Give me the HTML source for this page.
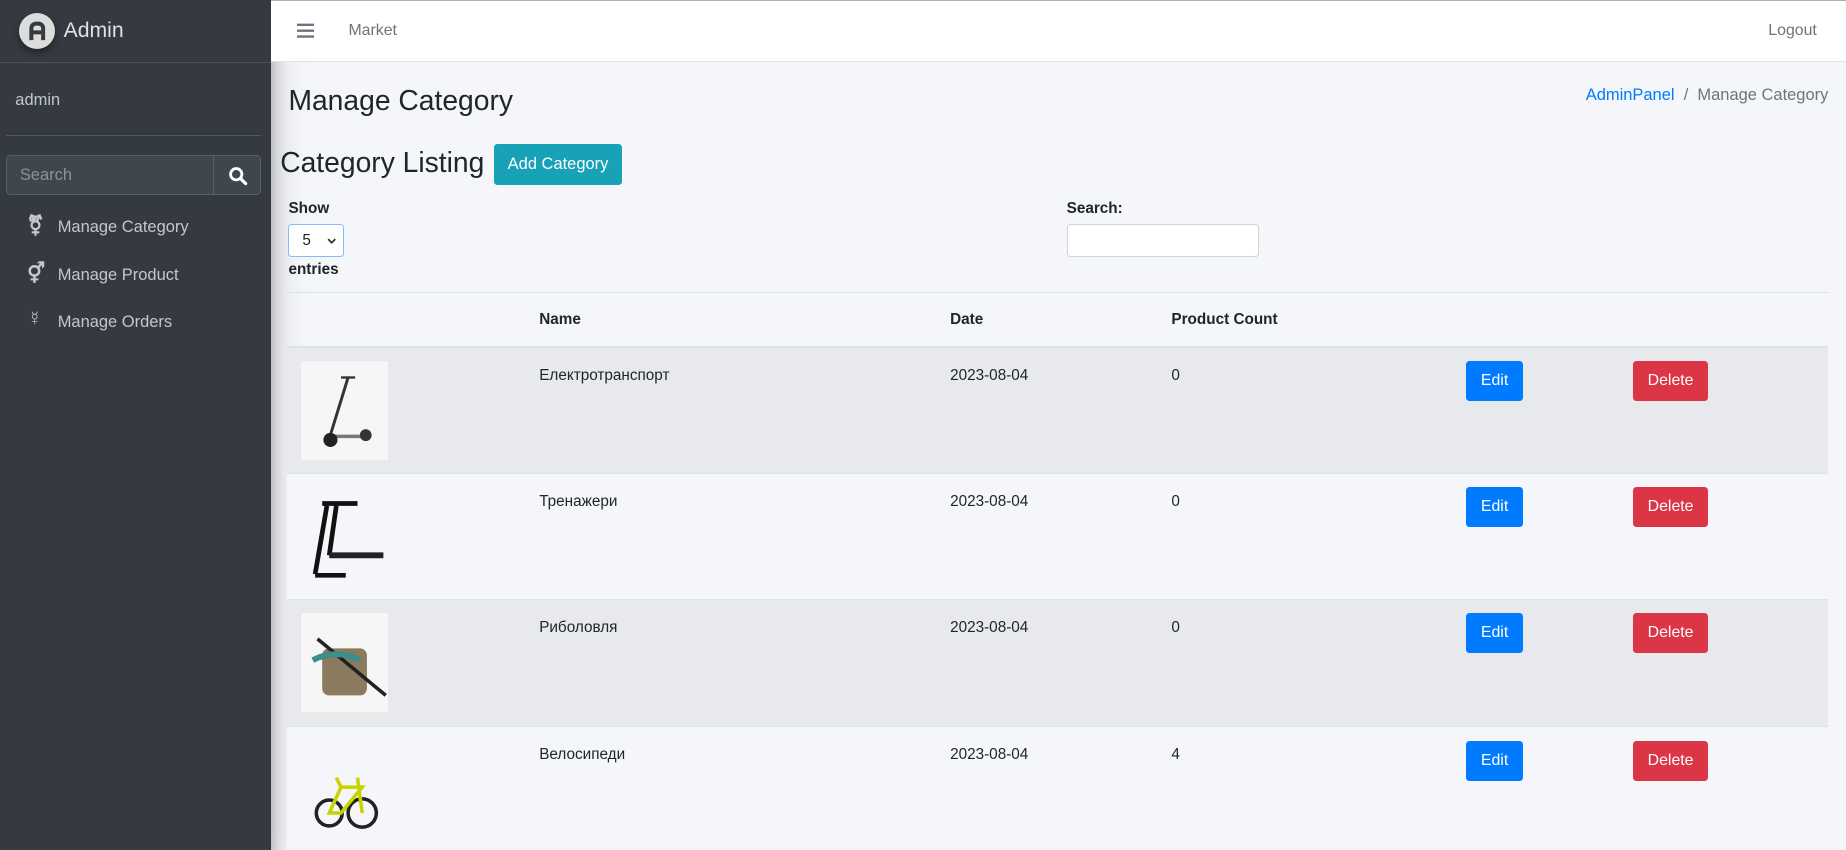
<!DOCTYPE html>
<html><head><meta charset="utf-8">
<style>
*{box-sizing:border-box;margin:0;padding:0}
html,body{width:1846px;height:850px;overflow:hidden}
body{zoom:1.1773;width:1568px;height:722px;position:relative;background:#f4f6f9;font-family:"Liberation Sans",sans-serif;color:#212529;font-size:14px}
.a{position:absolute;white-space:nowrap}
#side{position:absolute;left:0;top:0;width:230px;height:722px;background:#343a40;box-shadow:0 14px 28px rgba(0,0,0,.25),0 10px 10px rgba(0,0,0,.22)}
#nav{position:absolute;left:230px;top:0;width:1338px;height:53px;background:#fff;border-bottom:1px solid #dee2e6;border-top:1px solid #bcaaa4}
.btn{position:absolute;color:#fff;border-radius:3px;font-size:13.5px;display:flex;align-items:center;justify-content:center}
.row{position:absolute;left:244px;width:1309px;height:107.5px;border-top:1px solid #dee2e6}
.img{position:absolute;left:12px;top:11px;width:74px;height:84px;background:#f6f6f6}
.cell{position:absolute;top:16px;font-size:13px}
.ic{position:absolute;left:23px;font-size:17px;color:#c2c7d0;font-weight:bold}
.nt{position:absolute;left:49px;font-size:14px;color:#c2c7d0;white-space:nowrap}
</style></head><body>
<div id="side">
  <div class="a" style="left:16px;top:11px;width:31px;height:31px;border-radius:50%;background:#dcdcdc;box-shadow:0 3px 6px rgba(0,0,0,.4)">
    <svg width="31" height="31" viewBox="0 0 31 31"><path d="M10.5 23V13a4 4 0 0 1 4-4h2a4 4 0 0 1 4 4v10M10.5 16.5h10" fill="none" stroke="#343a40" stroke-width="3.4"/></svg>
  </div>
  <div class="a" style="left:54px;top:16px;font-size:18px;color:rgba(255,255,255,.85)">Admin</div>
  <div class="a" style="left:0;top:53px;width:230px;border-top:1px solid #4b545c"></div>
  <div class="a" style="left:13px;top:77px;font-size:14px;color:#c2c7d0">admin</div>
  <div class="a" style="left:5px;top:115px;width:217px;border-top:1px solid #4f5962"></div>
  <div class="a" style="left:5px;top:132px;width:217px;height:34px;background:#3f474e;border:1px solid #56606a;border-radius:4px">
    <div class="a" style="left:11px;top:8px;font-size:14px;color:#8a939b">Search</div>
    <div class="a" style="left:175px;top:0;width:1px;height:32px;background:#56606a"></div>
    <svg class="a" style="left:188px;top:8px" width="17" height="17" viewBox="0 0 17 17"><circle cx="7" cy="7" r="4.8" fill="none" stroke="#fff" stroke-width="2.4"/><path d="M10.5 10.5l4.5 4.5" stroke="#fff" stroke-width="2.8" stroke-linecap="round"/></svg>
  </div>
  <div class="ic" style="top:181px">⚧</div><div class="nt" style="top:185px">Manage Category</div>
  <div class="ic" style="top:222px">⚥</div><div class="nt" style="top:226px">Manage Product</div>
  <div class="ic" style="top:262px">☿</div><div class="nt" style="top:266px">Manage Orders</div>
</div>
<div id="nav">
  <svg class="a" style="left:22px;top:19px" width="15" height="13"><path d="M0 1.5h15M0 6.5h15M0 11.5h15" stroke="#6c757d" stroke-width="2"/></svg>
  <div class="a" style="left:66px;top:18px;font-size:13.5px;color:#6c757d">Market</div>
  <div class="a" style="left:1272px;top:18px;font-size:13.5px;color:#6c757d">Logout</div>
</div>
<div class="a" style="left:245px;top:71px;font-size:24px;color:#212529">Manage Category</div>
<div class="a" style="right:15px;top:73px;font-size:14px;color:#6c757d"><span style="color:#007bff">AdminPanel</span>&nbsp;&nbsp;/&nbsp;&nbsp;Manage Category</div>
<div class="a" style="left:238px;top:124px;font-size:24px">Category Listing</div>
<div class="btn" style="left:420px;top:122px;width:108px;height:35px;background:#17a2b8;font-size:14px">Add Category</div>
<div class="a" style="left:245px;top:170px;font-weight:bold;font-size:13px">Show</div>
<div class="a" style="left:245px;top:190px;width:47px;height:28px;background:#fff;border:1px solid #80bdff;border-radius:3px;font-size:13px;padding:6px 0 0 11px">5<svg style="position:absolute;left:32px;top:11px" width="8" height="6"><path d="M1 1l3 3 3-3" stroke="#333" stroke-width="1.5" fill="none"/></svg></div>
<div class="a" style="left:245px;top:222px;font-weight:bold;font-size:13px">entries</div>
<div class="a" style="left:906px;top:170px;font-weight:bold;font-size:13px">Search:</div>
<div class="a" style="left:906px;top:190px;width:163px;height:28px;background:#fff;border:1px solid #ced4da;border-radius:3px"></div>
<div class="a" style="left:244px;top:248px;width:1309px;border-top:1px solid #dee2e6"></div>
<div class="a" style="left:458px;top:264px;font-weight:bold;font-size:13px">Name</div>
<div class="a" style="left:807px;top:264px;font-weight:bold;font-size:13px">Date</div>
<div class="a" style="left:995px;top:264px;font-weight:bold;font-size:13px">Product Count</div>

<div class="row" style="top:294px;background:#e8e9ec;border-top:2px solid #dee2e6">
  <div class="img"><svg width="74" height="84"><path d="M40 14l-16 52" stroke="#333" stroke-width="2.5"/><path d="M34 14h12" stroke="#333" stroke-width="2"/><path d="M24 64h30" stroke="#777" stroke-width="3"/><circle cx="25" cy="67" r="6" fill="#222"/><circle cx="55" cy="63" r="5" fill="#333"/></svg></div>
  <div class="cell" style="left:214px">Електротранспорт</div><div class="cell" style="left:563px">2023-08-04</div><div class="cell" style="left:751px">0</div>
</div>
<div class="row" style="top:402px;background:#f4f6f9">
  <div class="img" style="background:#f4f6f9"><svg width="74" height="84"><path d="M18 14h30M22 16l-10 58M30 16l-6 42" stroke="#111" stroke-width="4"/><path d="M24 58h46" stroke="#222" stroke-width="5"/><path d="M12 75h26" stroke="#111" stroke-width="4"/></svg></div>
  <div class="cell" style="left:214px">Тренажери</div><div class="cell" style="left:563px">2023-08-04</div><div class="cell" style="left:751px">0</div>
</div>
<div class="row" style="top:509px;background:#e8e9ec">
  <div class="img"><svg width="74" height="84"><rect x="18" y="30" width="38" height="40" rx="6" fill="#8a7b5e"/><path d="M14 22l58 48" stroke="#222" stroke-width="3"/><path d="M10 40q20-10 40 0" stroke="#3a8f8a" stroke-width="5" fill="none"/></svg></div>
  <div class="cell" style="left:214px">Риболовля</div><div class="cell" style="left:563px">2023-08-04</div><div class="cell" style="left:751px">0</div>
</div>
<div class="row" style="top:617px;background:#f4f6f9;height:105px">
  <div class="img" style="background:#f4f6f9"><svg width="74" height="84"><circle cx="24" cy="62" r="11" fill="none" stroke="#222" stroke-width="3"/><circle cx="52" cy="62" r="12" fill="none" stroke="#222" stroke-width="3"/><path d="M24 62l10-22h18l-18 22zM52 62l-4-30M30 32l4 8" stroke="#c8d400" stroke-width="3" fill="none"/></svg></div>
  <div class="cell" style="left:214px">Велосипеди</div><div class="cell" style="left:563px">2023-08-04</div><div class="cell" style="left:751px">4</div>
</div>

<div class="btn" style="left:1245px;top:307px;width:49px;height:34px;background:#007bff">Edit</div>
<div class="btn" style="left:1387px;top:307px;width:64px;height:34px;background:#dc3545">Delete</div>
<div class="btn" style="left:1245px;top:414px;width:49px;height:34px;background:#007bff">Edit</div>
<div class="btn" style="left:1387px;top:414px;width:64px;height:34px;background:#dc3545">Delete</div>
<div class="btn" style="left:1245px;top:521px;width:49px;height:34px;background:#007bff">Edit</div>
<div class="btn" style="left:1387px;top:521px;width:64px;height:34px;background:#dc3545">Delete</div>
<div class="btn" style="left:1245px;top:629px;width:49px;height:34px;background:#007bff">Edit</div>
<div class="btn" style="left:1387px;top:629px;width:64px;height:34px;background:#dc3545">Delete</div>
</body></html>
